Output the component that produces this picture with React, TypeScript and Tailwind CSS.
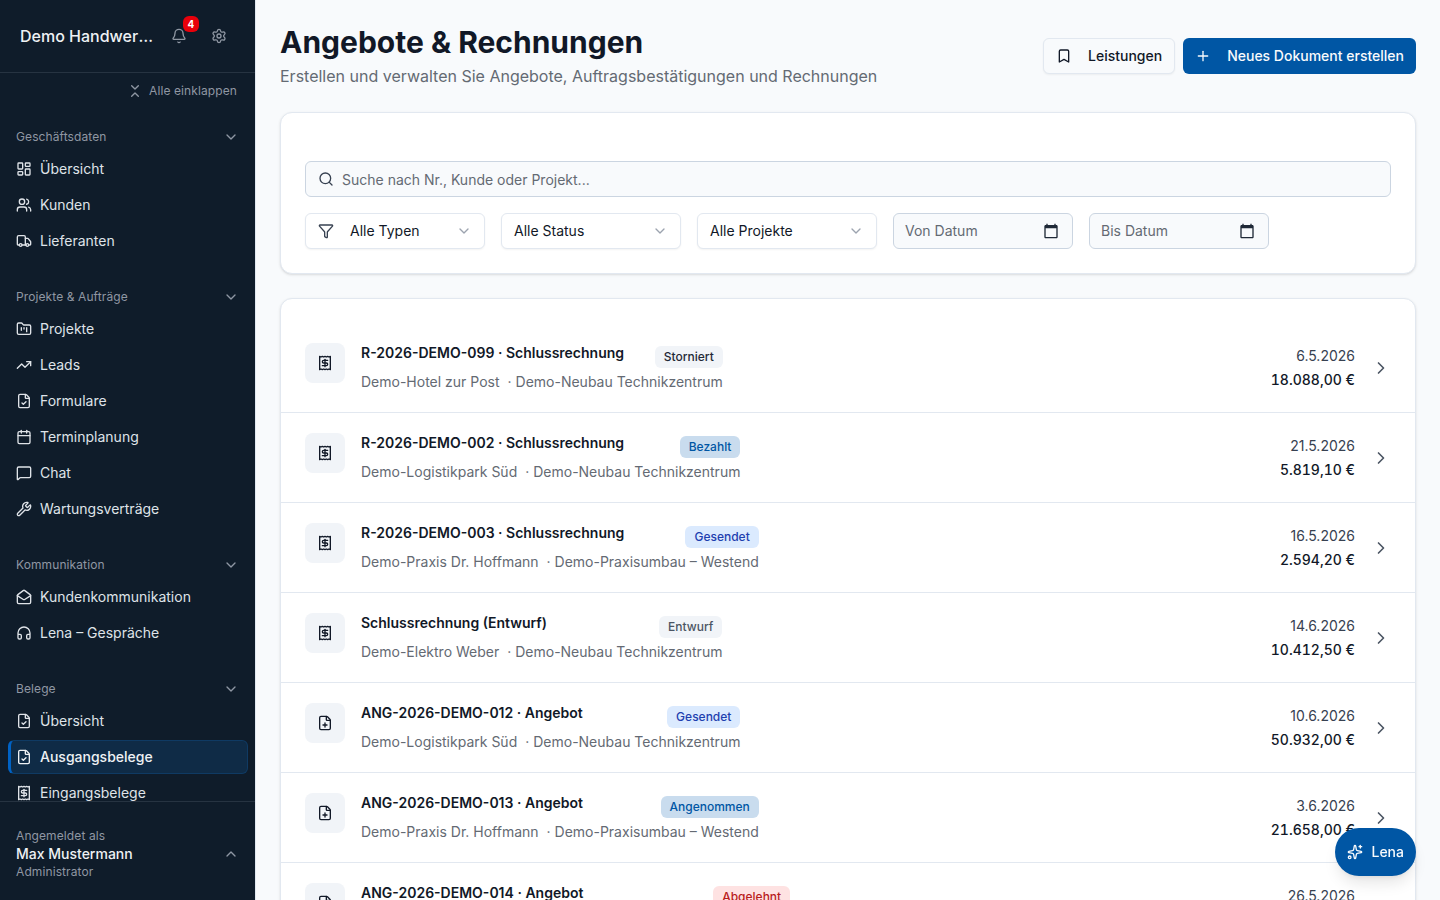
import {
  Bell,
  Bookmark,
  Calendar,
  ChevronDown,
  ChevronRight,
  ChevronUp,
  ChevronsDownUp,
  FileCheck,
  FilePlus,
  Filter,
  FolderKanban,
  Headphones,
  LayoutDashboard,
  MailOpen,
  MessageSquare,
  Plus,
  Receipt,
  Search,
  Settings,
  Sparkles,
  TrendingUp,
  Truck,
  Users,
  Wrench,
} from "lucide-react";

const navGroups = [
  {
    label: "Geschäftsdaten",
    items: [
      { label: "Übersicht", icon: LayoutDashboard },
      { label: "Kunden", icon: Users },
      { label: "Lieferanten", icon: Truck },
    ],
  },
  {
    label: "Projekte & Aufträge",
    items: [
      { label: "Projekte", icon: FolderKanban },
      { label: "Leads", icon: TrendingUp },
      { label: "Formulare", icon: FileCheck },
      { label: "Terminplanung", icon: Calendar },
      { label: "Chat", icon: MessageSquare },
      { label: "Wartungsverträge", icon: Wrench },
    ],
  },
  {
    label: "Kommunikation",
    items: [
      { label: "Kundenkommunikation", icon: MailOpen },
      { label: "Lena – Gespräche", icon: Headphones },
    ],
  },
  {
    label: "Belege",
    items: [
      { label: "Übersicht", icon: FileCheck },
      { label: "Ausgangsbelege", icon: FileCheck, active: true },
      { label: "Eingangsbelege", icon: Receipt },
    ],
  },
];

const badgeStyles = {
  Storniert: "bg-[#f1f4f8] text-[#1f2937]",
  Bezahlt: "bg-[#c9dcee] text-[#0056a4]",
  Gesendet: "bg-[#dbeafe] text-[#1e40af]",
  Entwurf: "bg-[#f1f4f8] text-[#4b5563]",
  Angenommen: "bg-[#c9dcee] text-[#0056a4]",
  Abgelehnt: "bg-[#fee2e2] text-[#b91c1c]",
};

type Status = keyof typeof badgeStyles;

const documents: {
  title: string;
  status: Status;
  customer: string;
  project: string;
  date: string;
  amount: string;
  icon: typeof Receipt;
}[] = [
  { title: "R-2026-DEMO-099 · Schlussrechnung", status: "Storniert", customer: "Demo-Hotel zur Post", project: "Demo-Neubau Technikzentrum", date: "6.5.2026", amount: "18.088,00 €", icon: Receipt },
  { title: "R-2026-DEMO-002 · Schlussrechnung", status: "Bezahlt", customer: "Demo-Logistikpark Süd", project: "Demo-Neubau Technikzentrum", date: "21.5.2026", amount: "5.819,10 €", icon: Receipt },
  { title: "R-2026-DEMO-003 · Schlussrechnung", status: "Gesendet", customer: "Demo-Praxis Dr. Hoffmann", project: "Demo-Praxisumbau – Westend", date: "16.5.2026", amount: "2.594,20 €", icon: Receipt },
  { title: "Schlussrechnung (Entwurf)", status: "Entwurf", customer: "Demo-Elektro Weber", project: "Demo-Neubau Technikzentrum", date: "14.6.2026", amount: "10.412,50 €", icon: Receipt },
  { title: "ANG-2026-DEMO-012 · Angebot", status: "Gesendet", customer: "Demo-Logistikpark Süd", project: "Demo-Neubau Technikzentrum", date: "10.6.2026", amount: "50.932,00 €", icon: FilePlus },
  { title: "ANG-2026-DEMO-013 · Angebot", status: "Angenommen", customer: "Demo-Praxis Dr. Hoffmann", project: "Demo-Praxisumbau – Westend", date: "3.6.2026", amount: "21.658,00 €", icon: FilePlus },
  { title: "ANG-2026-DEMO-014 · Angebot", status: "Abgelehnt", customer: "Demo-Wohnanlage Am Stadtgut", project: "Demo-Sanierung Heizzentrum", date: "26.5.2026", amount: "8.240,00 €", icon: FilePlus },
];

function Sidebar() {
  return (
    <aside className="flex h-full w-64 shrink-0 flex-col border-r border-[#e2e8f0] bg-[#0f1c2a]">
      <div className="flex h-[73px] shrink-0 items-center justify-between border-b border-[#263341] pl-5 pr-5">
        <span className="w-[134px] truncate text-base font-medium text-[#eef1f4]">Demo Handwerk GmbH</span>
        <div className="flex items-center gap-2">
          <div className="relative flex h-8 w-8 items-center justify-center text-[#8f97a3]">
            <Bell className="h-4 w-4" />
            <span className="absolute right-[-4px] top-[-4px] flex h-4 w-4 items-center justify-center rounded-md bg-[#e7000b] text-[10px] font-bold text-white">4</span>
          </div>
          <div className="flex h-8 w-8 items-center justify-center text-[#8f97a3]">
            <Settings className="h-4 w-4" />
          </div>
        </div>
      </div>
      <nav className="min-h-0 flex-1 overflow-hidden pl-2 pr-[7px]">
        <div className="flex h-[51px] items-start justify-end gap-1.5 pr-[11px] pt-[10px] text-xs leading-4 tracking-[0.1px] text-[#8f97a3]">
          <ChevronsDownUp className="h-4 w-4" />
          <span>Alle einklappen</span>
        </div>
        <div className="flex flex-col gap-[26px]">
          {navGroups.map((group) => (
            <div key={group.label} className="flex flex-col gap-0.5">
              <div className="flex h-[26px] items-center justify-between pl-2 pr-[9px] text-xs tracking-[0.1px] text-[#8f97a3]">
                <span>{group.label}</span>
                <ChevronDown className="h-4 w-4" />
              </div>
              {group.items.map((item) => {
                const Icon = item.icon;
                return (
                  <div
                    key={item.label + group.label}
                    className={
                      item.active
                        ? "flex h-[34px] items-center gap-2 rounded-md border border-l-[3px] border-[#0f3a63] border-l-[#0062c4] bg-[#0f2b46] pl-[5px] text-sm font-medium text-[#eef1f4]"
                        : "flex h-[34px] items-center gap-2 px-2 text-sm text-[#dfe3e8]"
                    }
                  >
                    <Icon className="h-4 w-4 shrink-0" />
                    <span>{item.label}</span>
                  </div>
                );
              })}
            </div>
          ))}
        </div>
      </nav>
      <div className="flex h-[99px] shrink-0 items-center justify-between border-t border-[#263341] pb-[5px] pl-4 pr-4 pt-[11px]">
        <div className="flex flex-col">
          <span className="text-xs leading-4 tracking-[0.1px] text-[#8f97a3]">Angemeldet als</span>
          <span className="text-sm font-medium leading-5 text-[#eef1f4]">Max Mustermann</span>
          <span className="text-xs leading-4 tracking-[0.1px] text-[#8f97a3]">Administrator</span>
        </div>
        <ChevronUp className="h-4 w-4 text-[#8f97a3]" />
      </div>
    </aside>
  );
}

function SelectBox({ label, withIcon }: { label: string; withIcon?: boolean }) {
  return (
    <div className="flex h-9 w-[180px] items-center rounded-md border border-[#e2e8f0] bg-white pl-3 pr-3 text-sm text-[#111827] shadow-xs">
      {withIcon && <Filter className="mr-4 h-4 w-4 text-[#374151]" />}
      <span className="flex-1">{label}</span>
      <ChevronDown className="h-4 w-4 text-[#9ca3af]" />
    </div>
  );
}

function DateBox({ label }: { label: string }) {
  return (
    <div className="flex h-9 w-[180px] items-center justify-between rounded-md border border-[#cbd5e1] bg-[#f8fafc] pl-[11px] pr-[13px] text-sm text-[#646a73]">
      <span>{label}</span>
      <svg viewBox="0 0 24 24" className="h-4 w-4 fill-[#1f2937]">
        <path d="M20 3h-1V1h-2v2H7V1H5v2H4c-1.1 0-2 .9-2 2v16c0 1.1.9 2 2 2h16c1.1 0 2-.9 2-2V5c0-1.1-.9-2-2-2zm0 18H4V8h16v13z" />
      </svg>
    </div>
  );
}

export default function App() {
  return (
    <div className="flex h-screen overflow-hidden bg-[#f8fafc] antialiased [font-family:Inter,sans-serif]">
      <Sidebar />
      <main className="min-w-0 flex-1 overflow-hidden p-6">
        <div className="mb-6 flex items-start justify-between">
          <div>
            <h1 className="text-3xl font-bold leading-9 text-[#111827]">Angebote &amp; Rechnungen</h1>
            <p className="mt-1 text-base text-[#646a73]">Erstellen und verwalten Sie Angebote, Auftragsbestätigungen und Rechnungen</p>
          </div>
          <div className="mt-[14px] flex gap-2">
            <button className="flex h-9 items-center gap-4 rounded-md border border-[#e2e8f0] bg-[#f8fafc] px-3 text-sm font-medium text-[#111827] shadow-xs">
              <Bookmark className="h-4 w-4" />
              Leistungen
            </button>
            <button className="flex h-9 items-center gap-4 rounded-md bg-[#0056a4] px-3 text-sm font-medium text-[#f8fafc]">
              <Plus className="h-4 w-4" />
              Neues Dokument erstellen
            </button>
          </div>
        </div>

        <section className="mb-6 rounded-xl border border-[#e2e8f0] bg-white px-6 pb-6 pt-12 shadow-sm">
          <div className="flex h-9 items-center gap-2 rounded-md border border-[#cbd5e1] bg-[#f8fafc] pl-3 text-sm text-[#646a73]">
            <Search className="h-4 w-4 text-[#374151]" />
            <span className="pt-px">Suche nach Nr., Kunde oder Projekt...</span>
          </div>
          <div className="mt-4 flex gap-4">
            <SelectBox label="Alle Typen" withIcon />
            <SelectBox label="Alle Status" />
            <SelectBox label="Alle Projekte" />
            <DateBox label="Von Datum" />
            <DateBox label="Bis Datum" />
          </div>
        </section>

        <section className="rounded-xl border border-[#e2e8f0] bg-white pt-6 shadow-sm">
          {documents.map((doc) => {
            const Icon = doc.icon;
            return (
              <div key={doc.title} className="flex h-[90px] items-start gap-4 border-b border-[#e2e8f0] px-6 py-5">
                <div className="flex h-10 w-10 shrink-0 items-center justify-center rounded-lg bg-[#f1f4f8] text-[#111827]">
                  <Icon className="h-4 w-4" />
                </div>
                <div className="inline-flex flex-col">
                  <div className="flex h-[25px] items-start justify-between gap-4">
                    <span className="text-sm font-semibold leading-5 text-[#111827]">{doc.title}</span>
                    <span className={`mt-[3px] flex h-[22px] items-center rounded-md px-[9px] text-xs font-medium ${badgeStyles[doc.status]}`}>{doc.status}</span>
                  </div>
                  <div className="mt-1 text-sm leading-5 text-[#646a73]">
                    {doc.customer}
                    <span className="ml-2">· {doc.project}</span>
                  </div>
                </div>
                <div className="ml-auto flex items-center gap-4 self-center">
                  <div className="flex flex-col items-end gap-1 text-sm leading-5 text-[#111827]">
                    <span className="text-[#374151]">{doc.date}</span>
                    <span className="font-medium tabular-nums">{doc.amount}</span>
                  </div>
                  <ChevronRight className="h-5 w-5 text-[#4b5563]" />
                </div>
              </div>
            );
          })}
        </section>
      </main>
      <button className="fixed bottom-6 right-6 flex h-12 items-center gap-2 rounded-full bg-[#0056a4] px-3 text-sm font-medium text-[#f8fafc] shadow-lg">
        <Sparkles className="h-4 w-4" />
        Lena
      </button>
    </div>
  );
}
